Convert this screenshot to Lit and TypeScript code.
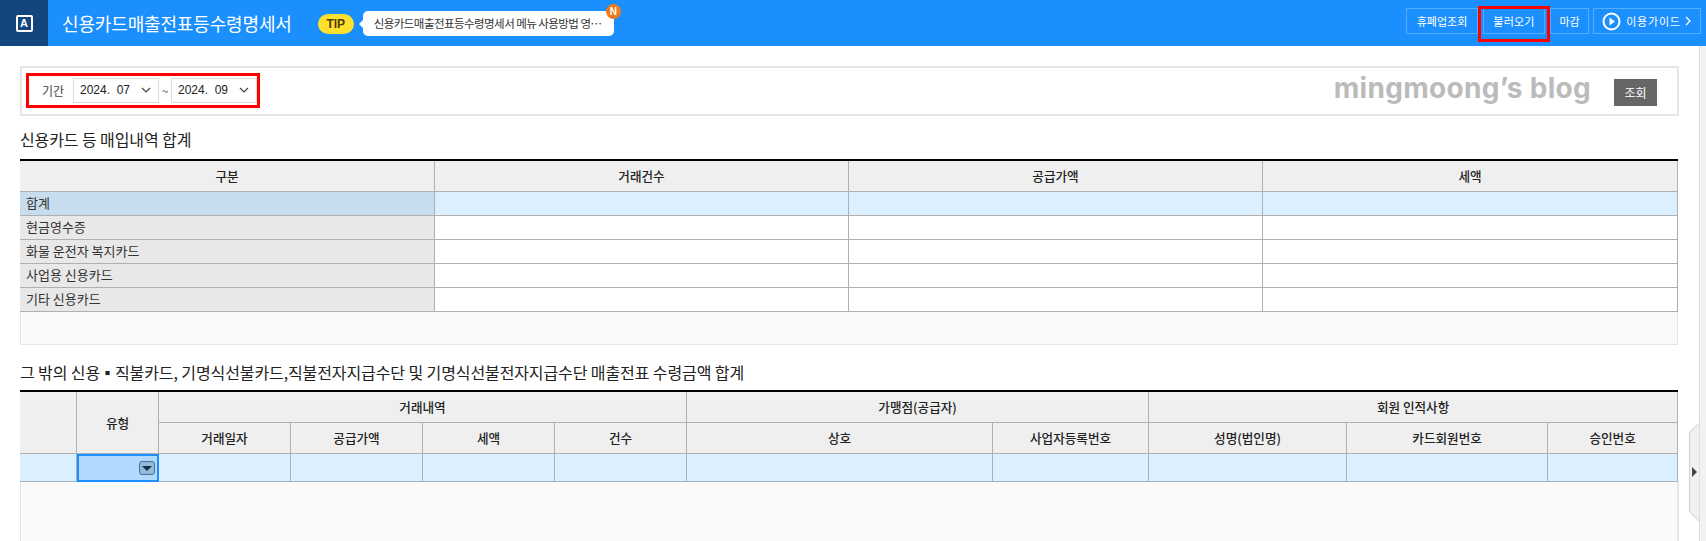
import {LitElement, html, css, svg} from 'lit';
import {customElement} from 'lit/decorators.js';

const chevron = svg`<path d="M1 1l4 4 4-4" fill="none" stroke="#444" stroke-width="1.2"/>`;

const summaryRows = [
    {label: '합계', total: true},
    {label: '현금영수증'},
    {label: '화물 운전자 복지카드'},
    {label: '사업용 신용카드'},
    {label: '기타 신용카드'},
];

const summaryCols = [415, 414, 414, 415];
const detailCols = [57, 82, 132, 132, 132, 132, 306, 156, 198, 201, 130];

@customElement('app-root')
export class AppRoot extends LitElement {
    static styles = css`
        :host {
            display: flex;
            flex-direction: column;
            height: 541px;
            overflow: hidden;
            position: relative;
            background: #fff;
            color: #222;
            font-family: "Noto Sans CJK KR", "Liberation Sans", sans-serif;
            font-size: 12px;
        }

        .top {
            display: flex;
            align-items: center;
            flex: none;
            height: 46px;
            background: #1c8fff;
            color: #fff;
        }

        .logo {
            display: flex;
            align-items: center;
            justify-content: center;
            flex: none;
            align-self: stretch;
            width: 48px;
            background: #13457f;
        }

        .logo span {
            box-sizing: border-box;
            display: flex;
            align-items: center;
            justify-content: center;
            width: 17px;
            height: 17px;
            border: 2px solid #fff;
            border-radius: 2px;
            font-family: "Liberation Sans", sans-serif;
            font-size: 11px;
            font-weight: 700;
            line-height: 1;
        }

        .title {
            margin-left: 14px;
            font-size: 18px;
            letter-spacing: -0.15px;
            white-space: nowrap;
        }

        .tip {
            display: flex;
            align-items: center;
            justify-content: center;
            box-sizing: border-box;
            width: 36px;
            height: 20px;
            margin-left: 26px;
            margin-top: 2px;
            border-radius: 10px;
            background: #ffe02e;
            color: #4d3d00;
            font-family: "Liberation Sans", sans-serif;
            font-size: 12px;
            font-weight: 700;
        }

        .bubble {
            position: relative;
            box-sizing: border-box;
            width: 251px;
            height: 25px;
            margin-left: 9px;
            padding-left: 11px;
            border-radius: 5px;
            background: #fff;
            color: #333;
            font-size: 11.5px;
            line-height: 25px;
            letter-spacing: -0.55px;
            white-space: nowrap;
        }

        .bubble::before {
            position: absolute;
            top: 9px;
            left: -4px;
            width: 0;
            height: 0;
            content: "";
            border-top: 4px solid transparent;
            border-right: 4px solid #fff;
            border-bottom: 4px solid transparent;
        }

        .new {
            position: absolute;
            top: -7px;
            right: -7px;
            width: 15px;
            height: 15px;
            border-radius: 50%;
            background: #f07a1a;
            color: #fff;
            font-family: "Liberation Sans", sans-serif;
            font-size: 10px;
            font-style: normal;
            font-weight: 700;
            line-height: 15px;
            letter-spacing: 0;
            text-align: center;
        }

        .actions {
            display: flex;
            margin-left: auto;
            margin-right: 5px;
            margin-top: -4px;
        }

        .btn {
            position: relative;
            box-sizing: border-box;
            display: flex;
            align-items: center;
            justify-content: center;
            height: 26px;
            border: 1px solid #56adff;
            font-size: 11px;
            white-space: nowrap;
        }

        .btn.closed {
            width: 72px;
        }

        .btn.load {
            width: 62px;
            margin-left: 5px;
            margin-right: 5px;
            letter-spacing: 0.2px;
        }

        .btn.done {
            width: 39px;
        }

        .btn.guide {
            gap: 4px;
            width: 108px;
            margin-left: 4px;
            letter-spacing: 0.8px;
        }

        .btn.guide svg {
            margin-right: 1px;
        }

        .btn .mark {
            position: absolute;
            top: -3px;
            right: -6px;
            bottom: -9px;
            left: -6px;
            border: 3px solid #f00;
        }

        .body {
            display: flex;
            flex: 1;
            min-height: 0;
        }

        .content {
            display: flex;
            flex-direction: column;
            flex: none;
            box-sizing: border-box;
            width: 1680px;
            padding: 20px 0 0 20px;
        }

        .rail {
            flex: none;
            width: 7px;
            margin-left: 19px;
            border-left: 1px solid #ddd;
            background: #f2f2f2;
        }

        .handle {
            position: absolute;
            top: 423px;
            left: 1689px;
        }

        .filter {
            display: flex;
            align-items: center;
            justify-content: space-between;
            box-sizing: border-box;
            width: 1659px;
            height: 50px;
            padding-right: 20px;
            padding-left: 4px;
            border: 2px solid #e6e6e6;
        }

        .range {
            display: flex;
            align-items: center;
            box-sizing: border-box;
            width: 234px;
            height: 35px;
            margin-top: -2px;
            padding-left: 13px;
            border: 3px solid #f00;
        }

        .range label {
            width: 31px;
            color: #444;
        }

        .picker {
            display: flex;
            align-items: center;
            justify-content: space-between;
            box-sizing: border-box;
            width: 86px;
            height: 25px;
            padding: 0 7px 0 6px;
            border: 1px solid #ddd;
            font-family: "Liberation Sans", sans-serif;
            font-size: 12px;
            white-space: pre;
        }

        .tilde {
            width: 12px;
            text-align: center;
            color: #555;
        }

        .side {
            display: flex;
            align-items: center;
        }

        .blog {
            margin-right: 23px;
            margin-bottom: 7px;
            color: #bbb;
            font-family: Inter, "Liberation Sans", sans-serif;
            font-size: 28px;
            font-weight: 700;
            letter-spacing: 0.3px;
            line-height: 34px;
            white-space: nowrap;
        }

        .search {
            width: 43px;
            height: 27px;
            margin-top: 3px;
            background: #666;
            color: #fff;
            line-height: 27px;
            text-align: center;
        }

        h2 {
            height: 20px;
            margin: 13px 0 10px;
            font-size: 16px;
            font-weight: 400;
            line-height: 20px;
            letter-spacing: -0.1px;
            white-space: nowrap;
        }

        h2.second {
            margin: 17px 0 8px;
        }

        h2 .dot {
            font-size: 15px;
            line-height: 0;
        }

        table {
            box-sizing: border-box;
            width: 1658px;
            border-collapse: separate;
            border-spacing: 0;
            border-top: 2px solid #000;
            table-layout: fixed;
        }

        th,
        td {
            box-sizing: border-box;
            padding: 0;
            border-right: 1px solid #b0b0b0;
            border-bottom: 1px solid #b0b0b0;
            font-size: 12px;
            font-weight: 400;
        }

        th {
            padding-bottom: 1px;
            background: #efefef;
            font-size: 12.6px;
            font-weight: 500;
            text-align: center;
        }

        .sum-head th {
            height: 31px;
        }

        .sum-row td {
            height: 24px;
        }

        td.name {
            padding-bottom: 2px;
            padding-left: 6px;
            background: #e8e8e8;
            color: #333;
            font-size: 13px;
        }

        .total td {
            background: #dbefff;
        }

        .total td.name {
            background: #c7dcec;
        }

        .sum-foot {
            box-sizing: border-box;
            width: 1658px;
            height: 33px;
            border: 1px solid #e6e6e6;
            border-top: 0;
            background: #fafafa;
        }

        .det-top th {
            height: 31px;
        }

        .det-sub th {
            height: 31px;
        }

        .det-row td {
            height: 28px;
            border-color: #9fb3c4;
            background: #dbefff;
        }

        td.combo {
            position: relative;
            border: 2px solid #1c8fff;
            background: #b0daff;
        }

        .drop {
            position: absolute;
            top: 5px;
            right: 2px;
            box-sizing: border-box;
            display: flex;
            align-items: center;
            justify-content: center;
            width: 16px;
            height: 14px;
            border: 1px solid #49708f;
            border-radius: 3px;
            background: #93bad8;
        }

        .drop::after {
            width: 0;
            height: 0;
            content: "";
            border-top: 5px solid #12304d;
            border-right: 5px solid transparent;
            border-left: 5px solid transparent;
        }

        .det-foot {
            flex: 1;
            box-sizing: border-box;
            width: 1659px;
            border-right: 2px solid #e6e6e6;
            border-left: 1px solid #e6e6e6;
            background: #fafafa;
        }
    `;

    private colgroup(widths: number[]) {
        return html`
            <colgroup>
                ${widths.map((w) => html`<col style="width:${w}px">`)}
            </colgroup>
        `;
    }

    render() {
        return html`
            <div class="top">
                <div class="logo"><span>A</span></div>
                <div class="title">신용카드매출전표등수령명세서</div>
                <div class="tip">TIP</div>
                <div class="bubble">
                    신용카드매출전표등수령명세서 메뉴 사용방법 영…
                    <i class="new">N</i>
                </div>
                <div class="actions">
                    <div class="btn closed">휴폐업조회</div>
                    <div class="btn load">불러오기<i class="mark"></i></div>
                    <div class="btn done">마감</div>
                    <div class="btn guide">
                        <svg width="19" height="19" viewBox="0 0 19 19">
                            <circle cx="9.5" cy="9.5" r="8" fill="none" stroke="#fff" stroke-width="2"/>
                            <path d="M7.5 5.5l5.5 4-5.5 4z" fill="#fff"/>
                        </svg>
                        이용가이드
                        <svg width="6" height="10" viewBox="0 0 6 10">
                            <path d="M1 1l4 4-4 4" fill="none" stroke="#fff" stroke-width="1.4"/>
                        </svg>
                    </div>
                </div>
            </div>
            <div class="body">
                <div class="content">
                    <div class="filter">
                        <div class="range">
                            <label>기간</label>
                            <div class="picker">2024.  07<svg width="10" height="6" viewBox="0 0 10 6">${chevron}</svg></div>
                            <span class="tilde">~</span>
                            <div class="picker">2024.  09<svg width="10" height="6" viewBox="0 0 10 6">${chevron}</svg></div>
                        </div>
                        <div class="side">
                            <div class="blog">mingmoong’s blog</div>
                            <div class="search">조회</div>
                        </div>
                    </div>

                    <h2>신용카드 등 매입내역 합계</h2>
                    <table>
                        ${this.colgroup(summaryCols)}
                        <tr class="sum-head">
                            <th>구분</th>
                            <th>거래건수</th>
                            <th>공급가액</th>
                            <th>세액</th>
                        </tr>
                        ${summaryRows.map((row) => html`
                            <tr class="sum-row ${row.total ? 'total' : ''}">
                                <td class="name">${row.label}</td>
                                <td></td>
                                <td></td>
                                <td></td>
                            </tr>
                        `)}
                    </table>
                    <div class="sum-foot"></div>

                    <h2 class="second">그 밖의 신용<span class="dot">▪</span>직불카드, 기명식선불카드,직불전자지급수단 및 기명식선불전자지급수단 매출전표 수령금액 합계</h2>
                    <table>
                        ${this.colgroup(detailCols)}
                        <tr class="det-top">
                            <th rowspan="2"></th>
                            <th rowspan="2">유형</th>
                            <th colspan="4">거래내역</th>
                            <th colspan="2">가맹점(공급자)</th>
                            <th colspan="3">회원 인적사항</th>
                        </tr>
                        <tr class="det-sub">
                            <th>거래일자</th>
                            <th>공급가액</th>
                            <th>세액</th>
                            <th>건수</th>
                            <th>상호</th>
                            <th>사업자등록번호</th>
                            <th>성명(법인명)</th>
                            <th>카드회원번호</th>
                            <th>승인번호</th>
                        </tr>
                        <tr class="det-row">
                            <td></td>
                            <td class="combo"><i class="drop"></i></td>
                            ${detailCols.slice(2).map(() => html`<td></td>`)}
                        </tr>
                    </table>
                    <div class="det-foot"></div>
                </div>
                <div class="rail"></div>
            </div>
            <svg class="handle" width="11" height="99" viewBox="0 0 11 99">
                <path d="M10 0.5L0.5 9V89L10 98" fill="#f0f0f0" stroke="#d0d0d0"/>
                <path d="M3 44l5 5-5 5z" fill="#444"/>
            </svg>
        `;
    }
}
